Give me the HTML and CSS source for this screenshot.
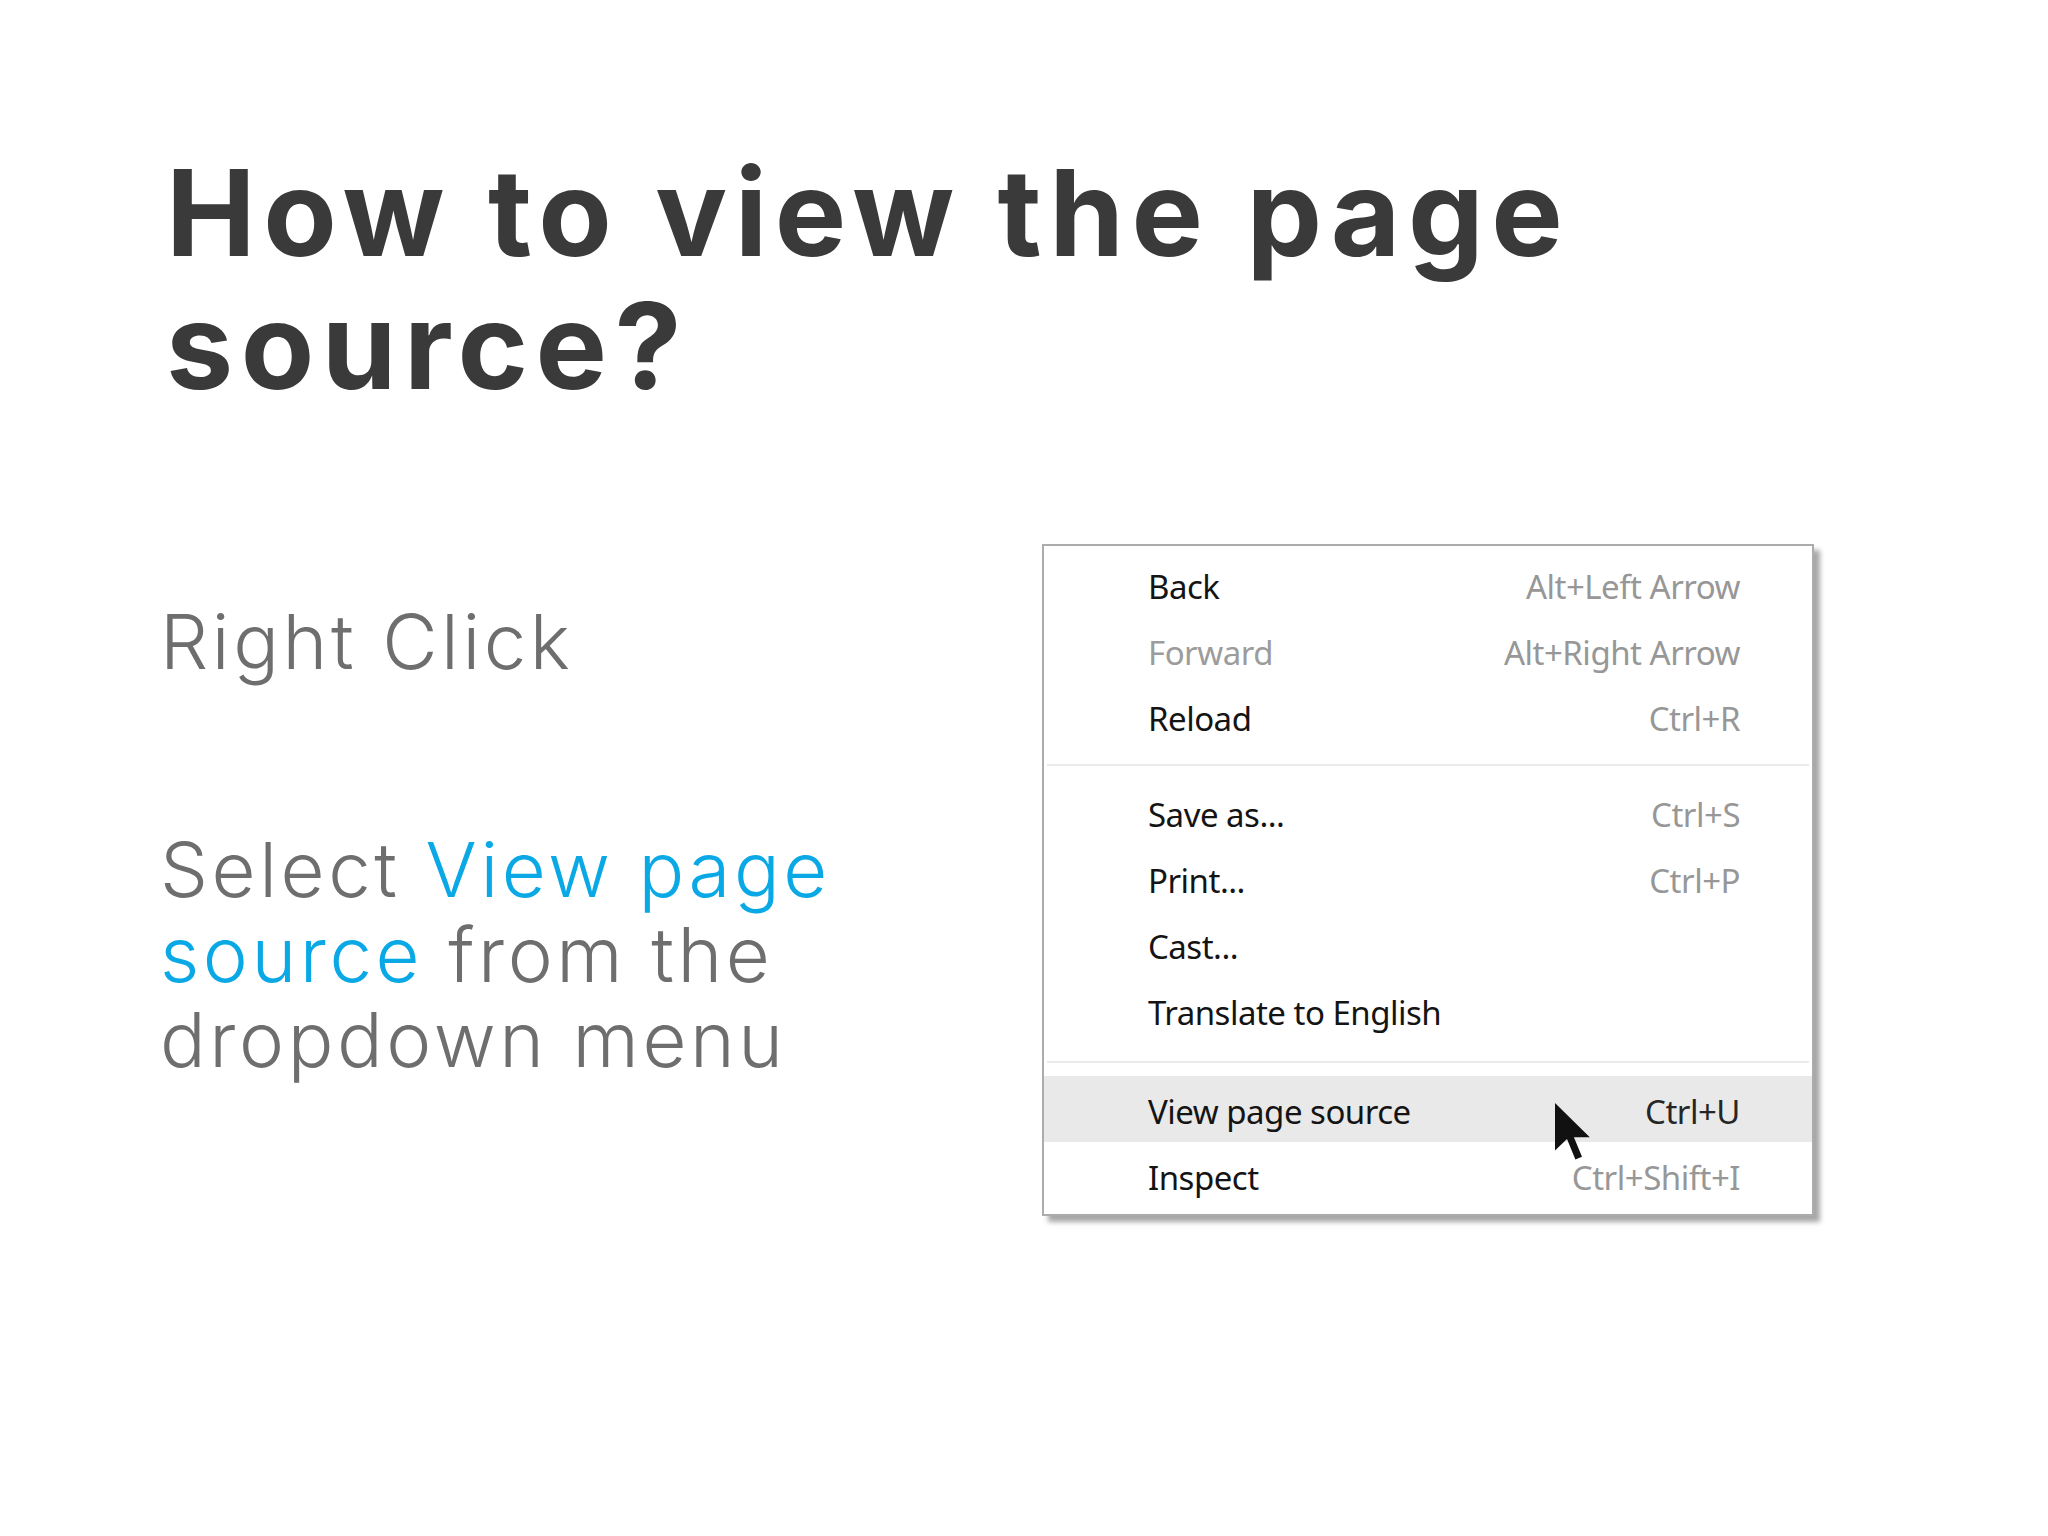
FILE: index.html
```html
<!DOCTYPE html>
<html lang="en">
<head>
<meta charset="utf-8">
<title>How to view the page source?</title>
<link rel="stylesheet" href="styles.css">
</head>
<body>
<main class="slide">
  <h1 class="title">How to view the page<br>source?</h1>
  <section class="content">
    <div class="steps">
      <p class="step step-first">Right Click</p>
      <p class="step step-second">Select <span class="hl">View page source</span> from the dropdown menu</p>
    </div>
    <div class="menu">
      <div class="item"><span class="label">Back</span><span class="key">Alt+Left Arrow</span></div>
      <div class="item disabled"><span class="label">Forward</span><span class="key">Alt+Right Arrow</span></div>
      <div class="item"><span class="label">Reload</span><span class="key">Ctrl+R</span></div>
      <div class="sep"></div>
      <div class="item"><span class="label">Save as...</span><span class="key">Ctrl+S</span></div>
      <div class="item"><span class="label">Print...</span><span class="key">Ctrl+P</span></div>
      <div class="item"><span class="label">Cast...</span><span class="key"></span></div>
      <div class="item"><span class="label">Translate to English</span><span class="key"></span></div>
      <div class="sep sep-low"></div>
      <div class="item active"><span class="label">View page source</span><span class="key">Ctrl+U</span></div>
      <div class="item"><span class="label">Inspect</span><span class="key">Ctrl+Shift+I</span></div>
      <svg class="cursor" width="36" height="57" viewBox="0 0 12 19" aria-hidden="true">
        <path d="M0 0 L0 15.8 L4 12 L6.8 18.8 L9 17.9 L6.3 11.4 L11.6 11.4 Z" fill="#111"/>
      </svg>
    </div>
  </section>
</main>
</body>
</html>
```
FILE: styles.css
```css
html, body {
  margin: 0;
  padding: 0;
  background: #ffffff;
}

.slide {
  width: 2048px;
  height: 1536px;
  box-sizing: border-box;
  padding: 146px 0 0 0;
  overflow: hidden;
}

.title {
  margin: 0 0 0 166px;
  font-family: Inter, "Liberation Sans", sans-serif;
  font-weight: 700;
  font-size: 120px;
  line-height: 133px;
  letter-spacing: 7.5px;
  color: #3a3a3a;
}

.content {
  margin-top: 132px;
  display: grid;
  grid-template-columns: 1042px 772px;
}

.steps {
  padding: 55px 0 0 160px;
}

.step {
  margin: 0;
  font-family: Inter, "Liberation Sans", sans-serif;
  font-weight: 300;
  font-size: 76px;
  line-height: 85px;
  letter-spacing: 3.6px;
  color: #6e6e6e;
  max-width: 720px;
}

.step-second {
  margin-top: 143px;
}

.hl {
  color: #0aa9e6;
}

.menu {
  position: relative;
  width: 772px;
  height: 672px;
  box-sizing: border-box;
  border: 2px solid #acacac;
  background: #ffffff;
  padding: 5px 0 0 0;
  box-shadow: 6px 6px 5px rgba(0, 0, 0, 0.35);
  font-family: "Noto Sans", "Open Sans", sans-serif;
  font-size: 33px;
  letter-spacing: -0.5px;
}

.item {
  display: flex;
  justify-content: space-between;
  height: 66px;
  box-sizing: border-box;
  padding: 6px 72px 0 104px;
  line-height: 60px;
  color: #141414;
}

.item .key {
  color: #979797;
}

.item.disabled .label {
  color: #9c9c9c;
}

.item.active {
  background: #e9e9e9;
}

.item.active .key {
  color: #262626;
}

.sep {
  height: 2px;
  margin: 15px 3px 13px 3px;
  background: #ebebeb;
}

.sep-low {
  margin-top: 18px;
}

.cursor {
  position: absolute;
  left: 511px;
  top: 557px;
}
```
